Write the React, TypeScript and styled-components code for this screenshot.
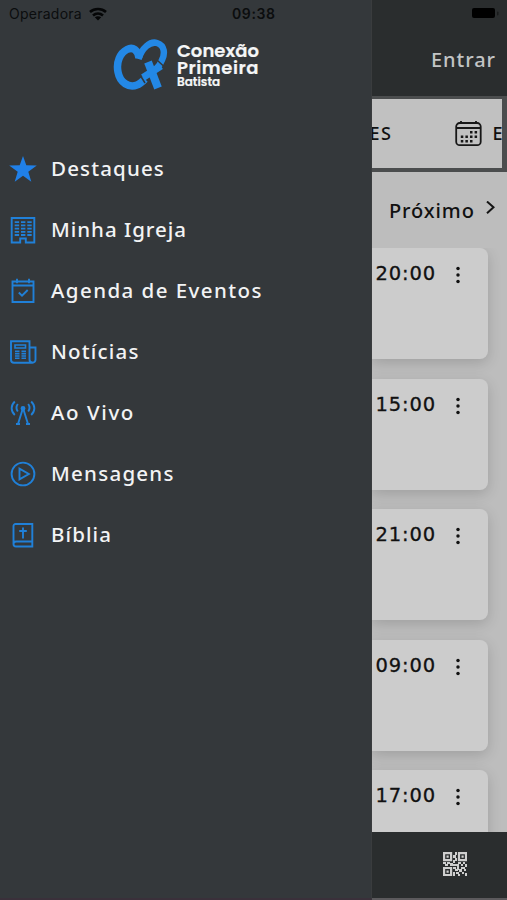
import React from "react";
import styled, { createGlobalStyle } from "styled-components";

const GlobalStyle = createGlobalStyle`
  * { box-sizing: border-box; }
  body { margin: 0; overflow: hidden; font-family: "Noto Sans", sans-serif; }
  svg { display: block; flex: none; }
`;

const Screen = styled.div`
  width: 507px;
  height: 900px;
  display: flex;
  overflow: hidden;
  background: #363a3d;
`;

const Drawer = styled.aside`
  width: 372px;
  flex: none;
  background: #34383b;
  border-right: 1px solid #3a3c3e;
  border-bottom: 2px solid #3a303a;
`;

const StatusBar = styled.div`
  height: 28px;
  display: flex;
  align-items: center;
  color: #0b0d0e;
  padding-left: 9px;
`;

const Carrier = styled.span`
  width: 80px;
  font: 400 14px/28px Inter, sans-serif;
  letter-spacing: 0.25px;
  white-space: nowrap;
`;

const Clock = styled.span`
  margin-left: 125px;
  font: 600 14px/28px Inter, sans-serif;
  letter-spacing: 0.6px;
  white-space: nowrap;
`;

const Brand = styled.div`
  height: 110px;
  padding: 10px 0 0 113px;
  display: flex;
  gap: 8px;
`;

const BrandName = styled.div`
  display: flex;
  flex-direction: column;
  padding-top: 4px;
  color: #f4f6f7;
  font-family: "Poppins", Inter, sans-serif;
  font-weight: 600;
`;

const BrandLine = styled.span<{ $size: number; $height: number; $tracking: number }>`
  font-size: ${(p) => p.$size}px;
  line-height: ${(p) => p.$height}px;
  letter-spacing: ${(p) => p.$tracking}px;
  -webkit-text-stroke: 0.2px currentColor;
`;

const Menu = styled.nav`
  display: flex;
  flex-direction: column;
`;

const MenuItem = styled.a`
  height: 61.1px;
  padding-left: 9px;
  display: flex;
  align-items: center;
  gap: 14px;
  color: #f2f3f4;
`;

const MenuLabel = styled.span<{ $tracking: number }>`
  padding-bottom: 2px;
  font-size: 20.5px;
  font-weight: 500;
  line-height: 28px;
  white-space: nowrap;
  letter-spacing: ${(p) => p.$tracking}px;
`;

const LineIcon = styled.svg`
  width: 28px;
  height: 28px;
  fill: none;
  stroke: #2080d8;
  stroke-width: 1.9;
`;

const Page = styled.main`
  flex: 1;
  min-width: 0;
  display: flex;
  flex-direction: column;
  background: #bdbdbd;
  color: #111;
`;

const Header = styled.header`
  height: 96px;
  flex: none;
  background: #2a2d2e;
  display: flex;
  flex-direction: column;
  align-items: flex-end;
`;

const BatterySlot = styled.div`
  height: 28px;
  padding: 8px 6px 0 0;
`;

const Login = styled.span`
  padding: 16px 11px 0 0;
  font-size: 20px;
  font-weight: 500;
  line-height: 32px;
  letter-spacing: 0.95px;
  color: #c2c4c5;
`;

const Tabs = styled.div`
  height: 76px;
  flex: none;
  background: #4b4d4e;
  padding: 3px 5px 4px 0;
`;

const TabStrip = styled.div`
  height: 69px;
  background: #c1c1c1;
  display: flex;
  align-items: center;
  overflow: hidden;
  font-size: 18px;
  letter-spacing: 1.5px;
  font-weight: 500;
`;

const CutTab = styled.span`
  margin-left: -2.5px;
  padding-bottom: 2px;
  width: 85px;
  flex: none;
`;

const NextTab = styled.span`
  margin-left: 11px;
  padding-bottom: 2px;
`;

const NextDay = styled.div`
  height: 76px;
  flex: none;
  display: flex;
  align-items: center;
  padding-left: 17px;
`;

const NextLabel = styled.span`
  width: 96px;
  font-size: 20px;
  font-weight: 500;
  letter-spacing: 0.9px;
`;

const Events = styled.div`
  flex: 1;
  min-height: 0;
  overflow: hidden;
  display: flex;
  flex-direction: column;
  gap: 19.6px;
`;

const EventCard = styled.article`
  width: 116px;
  height: 111px;
  flex: none;
  border-radius: 0 8px 8px 0;
  background: #cccccc;
  box-shadow: 0 4px 14px rgba(0, 0, 0, 0.16);
  display: flex;
  align-items: flex-start;
  padding: 11px 0 0 3.5px;
`;

const Time = styled.span`
  width: 78.5px;
  font: 400 19.5px/29px "DejaVu Sans", sans-serif;
  letter-spacing: 0.85px;
  -webkit-text-stroke: 0.3px currentColor;
`;

const Dots = styled.svg`
  margin-top: 7px;
`;

const Footer = styled.footer`
  height: 68px;
  flex: none;
  background: #2a2d2e;
  border-bottom: 2px solid #5c5a5d;
  display: flex;
  align-items: center;
  padding: 0 0 2px 71px;
`;

const StarIcon = () => (
  <LineIcon viewBox="0 0 28 28">
    <path fill="#2080e8" stroke="none" d="M14 1l3.3 9.3 10.5 .2-8.5 6.2 3 10-8.3-5.9-8.3 5.9 3-10-8.5-6.2 10.5-.2z" />
  </LineIcon>
);

const BuildingIcon = () => (
  <LineIcon viewBox="0 0 28 28">
    <path d="M2.7 2h22.6v24.5h-8.5v-4h-5.6v4H2.7z" />
    <path strokeWidth="1.8" strokeDasharray="4.4 1.9" d="M5.7 6.2h17M5.7 9.4h17M5.7 12.6h17M5.7 15.8h17M5.7 19h17" />
  </LineIcon>
);

const AgendaIcon = () => (
  <LineIcon viewBox="0 0 28 28">
    <path d="M3.5 4.5h21v20.5h-21zM3.5 8.5h21M8 1.8v4.5M20 1.8v4.5M9.8 15.5l3.2 3.2 5.7-5.7" />
  </LineIcon>
);

const NewsIcon = () => (
  <LineIcon viewBox="0 0 28 28">
    <path d="M20.5 9V3.2H2v18.5a3 3 0 003 3h18.5a3 3 0 003-3V9.5h-6v12a3 3 0 003 3" />
    <path strokeWidth="1.6" d="M6 7h10.5v3H6zM6 13.4h4.5M12.5 13.4h4.5M6 15.7h4.5M12.5 15.7h4.5M6 18h4.5M12.5 18h4.5M6 20.3h4.5M12.5 20.3h4.5" />
  </LineIcon>
);

const BroadcastIcon = () => (
  <LineIcon viewBox="0 0 28 28">
    <path d="M14 9L9 25M14 9l5 16M7 25h4M17 25h4M8.8 5a6.5 6.5 0 000 7.5M19.2 5a6.5 6.5 0 010 7.5M5.8 2.5c-4.2 4-4.2 9.500 0 13.500M22.200 2.500c4.200 4 4.200 9.500 0 13.500" />
    <circle cx="14" cy="9.5" r="1.5" fill="#2080d8" />
  </LineIcon>
);

const PlayIcon = () => (
  <LineIcon viewBox="0 0 28 28">
    <circle cx="14" cy="14" r="11.4" />
    <path d="M10.5 8.7v10.6l9.3-5.3z" />
  </LineIcon>
);

const BibleIcon = () => (
  <LineIcon viewBox="0 0 28 28">
    <path d="M23.3 20.5V3H6.5a2 2 0 00-2 2v18a2.5 2.5 0 002.5 2.5h16.3v-5H7a2.5 2.5 0 00-2.5 2.5M23.3 20.5v5M14 6.5v11M10.2 10h7.6" />
  </LineIcon>
);

const items = [
  { label: "Destaques", tracking: 1.15, Icon: StarIcon },
  { label: "Minha Igreja", tracking: 0.97, Icon: BuildingIcon },
  { label: "Agenda de Eventos", tracking: 1.43, Icon: AgendaIcon },
  { label: "Notícias", tracking: 1.18, Icon: NewsIcon },
  { label: "Ao Vivo", tracking: 1.6, Icon: BroadcastIcon },
  { label: "Mensagens", tracking: 1.25, Icon: PlayIcon },
  { label: "Bíblia", tracking: 1.1, Icon: BibleIcon },
];

const times = ["20:00", "15:00", "21:00", "09:00", "17:00"];

const QrCode = () => (
  <svg width="24" height="24" viewBox="0 0 24 24" fill="#cfcfcf">
    <path fill="none" stroke="#cfcfcf" strokeWidth="2.2" d="M1.1 1.1h7v7h-7zM16 1.1h7v7h-7zM1.1 16h7v7h-7z" />
    <path d="M3.5 3.5h2.2v2.2h-2.2zM18.5 3.5h2.2v2.2h-2.2zM3.5 18.5h2.2v2.2h-2.2z" />
    <path d="M12 0h2v3h-2zM10 3h3v3h-3zM12 6h2v3h-2zM10 8h2v3h-2zM0 10h3v2H0zM4 10h3v2H4zM2 12h3v2H2zM7 11h3v3H7zM10 12h6v2h-6zM15 10h3v2h-3zM18 12h2v2h-2zM20 10h2v2h-2zM22 12h2v3h-2zM10 15h3v2h-3zM14 14h2v4h-2zM18 15h4v2h-4zM12 17h3v2h-3zM16 17h3v3h-3zM21 17h2v2h-2zM10 20h2v4h-2zM13 20h3v2h-3zM15 22h2v2h-2zM19 20h2v2h-2zM22 21h2v3h-2z" />
  </svg>
);

const BrandMark = () => (
  <svg width="56" height="54" viewBox="0 0 56 54" fill="none" stroke="#2388e6">
    <path strokeWidth="7.5" d="M26 20C25 12 20 8.500 14 11.500C7 15 3 24 5 34C7 45 16 50 24 47C27 46 29 44 32 41" />
    <path strokeWidth="6.500" d="M25.500 21C29 10 37 3 44 5C52 7.500 52 16 49 22C48 25 46 28 43 31" />
    <path strokeWidth="8" d="M35 24L45 50" />
    <path strokeWidth="7" d="M30 39.500L48 28" />
    <path stroke="#34383b" strokeWidth="1.500" d="M44.500 22.500l6 5.500M28 38.500l4 6.500" />
  </svg>
);

const CalendarIcon = () => (
  <svg width="27" height="27" viewBox="0 0 27 27" fill="none" stroke="#171717" strokeWidth="1.8">
    <rect x="1.2" y="3" width="24.5" height="22.2" rx="3.5" />
    <path d="M1.2 8h24.5M6 1v3M21 1v3" />
    <path strokeWidth="2.5" strokeDasharray="2.5 2.1" d="M15 12.3h7.5M5.8 16.8h17M5.8 21.2h12" />
  </svg>
);

export default function App() {
  return (
    <>
      <GlobalStyle />
      <Screen>
        <Drawer>
          <StatusBar>
            <Carrier>Operadora</Carrier>
            <svg width="18" height="14" viewBox="0 0 18 14" fill="none" stroke="#050607" strokeWidth="2.6">
              <path d="M1 5C5.5 1 12.5 1 17 5M4 8.5c3-2.6 7-2.6 10 0" />
              <path fill="#050607" stroke="none" d="M5.8 10.3q3.2-2.2 6.4 0L9 13.6z" />
            </svg>
            <Clock>09:38</Clock>
          </StatusBar>
          <Brand>
            <BrandMark />
            <BrandName>
              <BrandLine $size={18} $height={17} $tracking={0.05}>Conexão</BrandLine>
              <BrandLine $size={18} $height={17} $tracking={0.55}>Primeira</BrandLine>
              <BrandLine $size={12} $height={12.5} $tracking={0}>Batista</BrandLine>
            </BrandName>
          </Brand>
          <Menu>
            {items.map(({ label, tracking, Icon }) => (
              <MenuItem key={label}>
                <Icon />
                <MenuLabel $tracking={tracking}>{label}</MenuLabel>
              </MenuItem>
            ))}
          </Menu>
        </Drawer>
        <Page>
          <Header>
            <BatterySlot>
              <svg width="29" height="12" viewBox="0 0 29 12" fill="#000">
                <rect width="23" height="10" rx="2" />
                <rect x="25" y="3.5" width="1.5" height="4" rx="0.7" opacity="0.4" />
              </svg>
            </BatterySlot>
            <Login>Entrar</Login>
          </Header>
          <Tabs>
            <TabStrip>
              <CutTab>ES</CutTab>
              <CalendarIcon />
              <NextTab>E</NextTab>
            </TabStrip>
          </Tabs>
          <NextDay>
            <NextLabel>Próximo</NextLabel>
            <svg width="12" height="18" viewBox="0 0 12 18" fill="none" stroke="#151515" strokeWidth="2">
              <path d="M2 .5l6.5 5.8L2 12.3" />
            </svg>
          </NextDay>
          <Events>
            {times.map((time) => (
              <EventCard key={time}>
                <Time>{time}</Time>
                <Dots width="8" height="18" viewBox="0 0 8 18" fill="#111">
                  <circle cx="4" cy="2.5" r="1.75" />
                  <circle cx="4" cy="9" r="1.75" />
                  <circle cx="4" cy="15.5" r="1.75" />
                </Dots>
              </EventCard>
            ))}
          </Events>
          <Footer>
            <QrCode />
          </Footer>
        </Page>
      </Screen>
    </>
  );
}
